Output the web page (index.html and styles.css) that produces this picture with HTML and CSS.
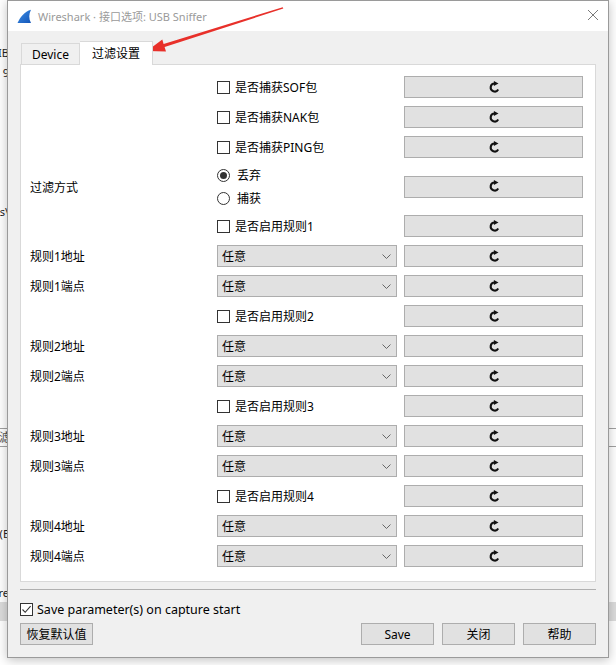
FILE: index.html
```html
<!doctype html>
<html lang="zh-CN">
  <head>
    <meta charset="UTF-8" />
    <title>Wireshark · 接口选项: USB Sniffer</title>
    <link rel="stylesheet" href="styles.css">
  </head>
  <body>
    <!-- 背景中的主窗口残影 -->
    <div class="backdrop">
      <span class="bg-text" style="top:45px">IB</span>
      <span class="bg-text" style="top:65px">9</span>
      <span class="bg-text" style="top:204px">s\</span>
      <div class="bg-field">滤</div>
      <span class="bg-text" style="top:526px">(E</span>
      <span class="bg-text" style="top:585px">re</span>
      <div class="bg-strip"></div>
    </div>

    <div class="window">
      <!-- 标题栏 -->
      <div class="titlebar">
        <svg class="app-icon" width="15" height="15" viewBox="0 0 15 15">
          <defs>
            <linearGradient id="fin" x1="0" y1="0" x2="1" y2="1">
              <stop offset="0" stop-color="#3d8fe6" />
              <stop offset="1" stop-color="#1456b8" />
            </linearGradient>
          </defs>
          <path d="M0.5 14 C3 8.5 7.5 2.5 14 0.8 C11.8 5 11.6 9.8 14 14 Z" fill="url(#fin)" />
        </svg>
        <div class="title-text">Wireshark · 接口选项: USB Sniffer</div>
        <svg class="close-icon" width="12" height="12" viewBox="0 0 12 12">
          <path d="M1 1 L11 11 M11 1 L1 11" stroke="#7a7a7a" stroke-width="1" />
        </svg>
      </div>

      <div class="dialog-body">
        <!-- 标签页 -->
        <div class="tabs">
          <div class="tab">Device</div>
          <div class="tab active">过滤设置</div>
        </div>

        <div class="pane">
          <div class="form-grid">
            <div class="label"></div>
            <label class="check"><span class="box"></span>是否捕获SOF包</label>
            <button class="reset"><svg width="13" height="13" viewBox="0 0 12 12"><path d="M6.2 2.3 A3.7 3.7 0 1 0 9.4 7.8" fill="none" stroke="#111" stroke-width="1.9" /><path d="M5.4 0 L9.7 2.3 L5.4 4.6 Z" fill="#111" /></svg></button>

            <div class="label"></div>
            <label class="check"><span class="box"></span>是否捕获NAK包</label>
            <button class="reset"><svg width="13" height="13" viewBox="0 0 12 12"><path d="M6.2 2.3 A3.7 3.7 0 1 0 9.4 7.8" fill="none" stroke="#111" stroke-width="1.9" /><path d="M5.4 0 L9.7 2.3 L5.4 4.6 Z" fill="#111" /></svg></button>

            <div class="label"></div>
            <label class="check"><span class="box"></span>是否捕获PING包</label>
            <button class="reset"><svg width="13" height="13" viewBox="0 0 12 12"><path d="M6.2 2.3 A3.7 3.7 0 1 0 9.4 7.8" fill="none" stroke="#111" stroke-width="1.9" /><path d="M5.4 0 L9.7 2.3 L5.4 4.6 Z" fill="#111" /></svg></button>

            <div class="label">过滤方式</div>
            <div class="radio-group">
              <label class="radio"><span class="dot checked"></span>丢弃</label>
              <label class="radio"><span class="dot"></span>捕获</label>
            </div>
            <div class="reset-cell">
              <button class="reset"><svg width="13" height="13" viewBox="0 0 12 12"><path d="M6.2 2.3 A3.7 3.7 0 1 0 9.4 7.8" fill="none" stroke="#111" stroke-width="1.9" /><path d="M5.4 0 L9.7 2.3 L5.4 4.6 Z" fill="#111" /></svg></button>
            </div>

            <div class="label"></div>
            <label class="check"><span class="box"></span>是否启用规则1</label>
            <button class="reset"><svg width="13" height="13" viewBox="0 0 12 12"><path d="M6.2 2.3 A3.7 3.7 0 1 0 9.4 7.8" fill="none" stroke="#111" stroke-width="1.9" /><path d="M5.4 0 L9.7 2.3 L5.4 4.6 Z" fill="#111" /></svg></button>

            <div class="label">规则1地址</div>
            <div class="combo">任意<svg width="9" height="5" viewBox="0 0 9 5"><path d="M0.5 0.5 L4.5 4.5 L8.5 0.5" fill="none" stroke="#666" /></svg></div>
            <button class="reset"><svg width="13" height="13" viewBox="0 0 12 12"><path d="M6.2 2.3 A3.7 3.7 0 1 0 9.4 7.8" fill="none" stroke="#111" stroke-width="1.9" /><path d="M5.4 0 L9.7 2.3 L5.4 4.6 Z" fill="#111" /></svg></button>

            <div class="label">规则1端点</div>
            <div class="combo">任意<svg width="9" height="5" viewBox="0 0 9 5"><path d="M0.5 0.5 L4.5 4.5 L8.5 0.5" fill="none" stroke="#666" /></svg></div>
            <button class="reset"><svg width="13" height="13" viewBox="0 0 12 12"><path d="M6.2 2.3 A3.7 3.7 0 1 0 9.4 7.8" fill="none" stroke="#111" stroke-width="1.9" /><path d="M5.4 0 L9.7 2.3 L5.4 4.6 Z" fill="#111" /></svg></button>

            <div class="label"></div>
            <label class="check"><span class="box"></span>是否启用规则2</label>
            <button class="reset"><svg width="13" height="13" viewBox="0 0 12 12"><path d="M6.2 2.3 A3.7 3.7 0 1 0 9.4 7.8" fill="none" stroke="#111" stroke-width="1.9" /><path d="M5.4 0 L9.7 2.3 L5.4 4.6 Z" fill="#111" /></svg></button>

            <div class="label">规则2地址</div>
            <div class="combo">任意<svg width="9" height="5" viewBox="0 0 9 5"><path d="M0.5 0.5 L4.5 4.5 L8.5 0.5" fill="none" stroke="#666" /></svg></div>
            <button class="reset"><svg width="13" height="13" viewBox="0 0 12 12"><path d="M6.2 2.3 A3.7 3.7 0 1 0 9.4 7.8" fill="none" stroke="#111" stroke-width="1.9" /><path d="M5.4 0 L9.7 2.3 L5.4 4.6 Z" fill="#111" /></svg></button>

            <div class="label">规则2端点</div>
            <div class="combo">任意<svg width="9" height="5" viewBox="0 0 9 5"><path d="M0.5 0.5 L4.5 4.5 L8.5 0.5" fill="none" stroke="#666" /></svg></div>
            <button class="reset"><svg width="13" height="13" viewBox="0 0 12 12"><path d="M6.2 2.3 A3.7 3.7 0 1 0 9.4 7.8" fill="none" stroke="#111" stroke-width="1.9" /><path d="M5.4 0 L9.7 2.3 L5.4 4.6 Z" fill="#111" /></svg></button>

            <div class="label"></div>
            <label class="check"><span class="box"></span>是否启用规则3</label>
            <button class="reset"><svg width="13" height="13" viewBox="0 0 12 12"><path d="M6.2 2.3 A3.7 3.7 0 1 0 9.4 7.8" fill="none" stroke="#111" stroke-width="1.9" /><path d="M5.4 0 L9.7 2.3 L5.4 4.6 Z" fill="#111" /></svg></button>

            <div class="label">规则3地址</div>
            <div class="combo">任意<svg width="9" height="5" viewBox="0 0 9 5"><path d="M0.5 0.5 L4.5 4.5 L8.5 0.5" fill="none" stroke="#666" /></svg></div>
            <button class="reset"><svg width="13" height="13" viewBox="0 0 12 12"><path d="M6.2 2.3 A3.7 3.7 0 1 0 9.4 7.8" fill="none" stroke="#111" stroke-width="1.9" /><path d="M5.4 0 L9.7 2.3 L5.4 4.6 Z" fill="#111" /></svg></button>

            <div class="label">规则3端点</div>
            <div class="combo">任意<svg width="9" height="5" viewBox="0 0 9 5"><path d="M0.5 0.5 L4.5 4.5 L8.5 0.5" fill="none" stroke="#666" /></svg></div>
            <button class="reset"><svg width="13" height="13" viewBox="0 0 12 12"><path d="M6.2 2.3 A3.7 3.7 0 1 0 9.4 7.8" fill="none" stroke="#111" stroke-width="1.9" /><path d="M5.4 0 L9.7 2.3 L5.4 4.6 Z" fill="#111" /></svg></button>

            <div class="label"></div>
            <label class="check"><span class="box"></span>是否启用规则4</label>
            <button class="reset"><svg width="13" height="13" viewBox="0 0 12 12"><path d="M6.2 2.3 A3.7 3.7 0 1 0 9.4 7.8" fill="none" stroke="#111" stroke-width="1.9" /><path d="M5.4 0 L9.7 2.3 L5.4 4.6 Z" fill="#111" /></svg></button>

            <div class="label">规则4地址</div>
            <div class="combo">任意<svg width="9" height="5" viewBox="0 0 9 5"><path d="M0.5 0.5 L4.5 4.5 L8.5 0.5" fill="none" stroke="#666" /></svg></div>
            <button class="reset"><svg width="13" height="13" viewBox="0 0 12 12"><path d="M6.2 2.3 A3.7 3.7 0 1 0 9.4 7.8" fill="none" stroke="#111" stroke-width="1.9" /><path d="M5.4 0 L9.7 2.3 L5.4 4.6 Z" fill="#111" /></svg></button>

            <div class="label">规则4端点</div>
            <div class="combo">任意<svg width="9" height="5" viewBox="0 0 9 5"><path d="M0.5 0.5 L4.5 4.5 L8.5 0.5" fill="none" stroke="#666" /></svg></div>
            <button class="reset"><svg width="13" height="13" viewBox="0 0 12 12"><path d="M6.2 2.3 A3.7 3.7 0 1 0 9.4 7.8" fill="none" stroke="#111" stroke-width="1.9" /><path d="M5.4 0 L9.7 2.3 L5.4 4.6 Z" fill="#111" /></svg></button>
          </div>
        </div>

        <div class="separator"></div>

        <label class="check save-check">
          <span class="box checked"><svg width="11" height="11" viewBox="0 0 11 11"><path d="M1.5 5.5 L4.2 8.3 L9.6 2.2" fill="none" stroke="#333" stroke-width="1.1" /></svg></span>Save parameter(s) on capture start
        </label>

        <div class="button-row">
          <button class="btn">恢复默认值</button>
          <div class="spacer"></div>
          <button class="btn">Save</button>
          <button class="btn">关闭</button>
          <button class="btn">帮助</button>
        </div>
      </div>
    </div>

    <!-- 标注用的红色箭头 -->
    <svg class="annotation" width="616" height="80" viewBox="0 0 616 80">
      <polygon points="147,51 166,51.4 164.6,47 283.3,8.6 282.7,7.2 163.6,43.9 162.3,39.6" fill="#e8302a" />
    </svg>
  </body>
</html>
```

FILE: styles.css
```css
* {
  margin: 0;
  padding: 0;
  box-sizing: border-box;
}

body {
  width: 616px;
  height: 665px;
  overflow: hidden;
  position: relative;
  background: #fff;
  font-family: 'Noto Sans', 'Noto Sans CJK SC', sans-serif;
  font-size: 12px;
  color: #000;
}

/* 背景窗口 */
.backdrop {
  position: absolute;
  inset: 0;
}

.bg-text {
  position: absolute;
  left: -5px;
  width: 14px;
  text-align: right;
  font-size: 11px;
  color: #222;
}

.bg-field {
  position: absolute;
  top: 428px;
  left: -14px;
  right: -2px;
  height: 19px;
  border: 1px solid #a0a0a0;
  padding-left: 12px;
  font-size: 12px;
  line-height: 17px;
  color: #555;
}

.bg-strip {
  position: absolute;
  top: 602px;
  left: 0;
  right: 0;
  height: 19px;
  background: #dcdcdc;
}

/* 对话框 */
.window {
  position: absolute;
  left: 7px;
  top: 0;
  width: 602px;
  height: 658px;
  background: #f0f0f0;
  border: 1px solid #9a9a9a;
  box-shadow: 0 2px 10px rgba(0, 0, 0, 0.25);
  display: flex;
  flex-direction: column;
}

.titlebar {
  height: 30px;
  background: #fff;
  display: flex;
  align-items: center;
  padding: 0 9px 0 9px;
}

.app-icon {
  margin-right: 6px;
}

.title-text {
  flex: 1;
  font-size: 11px;
  color: #9a9a9a;
  margin-top: -1px;
}

.close-icon {
  margin-top: -2px;
}

.dialog-body {
  flex: 1;
  padding: 10px 12px 0 12px;
  display: flex;
  flex-direction: column;
}

/* 标签页 */
.tabs {
  display: flex;
  align-items: flex-end;
  height: 23px;
  padding-left: 1px;
}

.tab {
  height: 21px;
  width: 59px;
  border: 1px solid #d9d9d9;
  border-bottom: none;
  background: #f0f0f0;
  display: flex;
  align-items: center;
  justify-content: center;
  font-size: 12px;
}

.tab.active {
  position: relative;
  z-index: 1;
  width: 73px;
  height: 24px;
  margin-bottom: -1px;
  border-left: none;
  background: #fff;
  padding-bottom: 2px;
}

.pane {
  height: 518px;
  background: #fff;
  border: 1px solid #d9d9d9;
  padding: 11px 12px 0 9px;
}

.form-grid {
  display: grid;
  grid-template-columns: 187px 180px 186px;
  grid-template-rows: repeat(3, 22px) 41px repeat(12, 22px);
  row-gap: 8px;
}

.form-grid .reset {
  margin-left: 7px;
}

.reset-cell {
  display: flex;
  align-items: center;
}

.reset-cell .reset {
  flex: 1;
}

.label {
  display: flex;
  align-items: center;
  white-space: nowrap;
}

/* 复选框 / 单选框 */
.check {
  display: flex;
  align-items: center;
  white-space: nowrap;
}

.box {
  width: 13px;
  height: 13px;
  border: 1px solid #333;
  background: #fff;
  margin-right: 5px;
  display: flex;
  align-items: center;
  justify-content: center;
  flex-shrink: 0;
}

.radio-group {
  display: flex;
  flex-direction: column;
  justify-content: space-between;
}

.radio {
  display: flex;
  align-items: center;
  height: 18px;
}

.dot {
  width: 13px;
  height: 13px;
  border: 1px solid #333;
  border-radius: 50%;
  margin-right: 7px;
  display: flex;
  align-items: center;
  justify-content: center;
}

.dot.checked::after {
  content: '';
  width: 7px;
  height: 7px;
  border-radius: 50%;
  background: #333;
}

/* 下拉框 */
.combo {
  height: 22px;
  background: #e1e1e1;
  border: 1px solid #adadad;
  display: flex;
  align-items: center;
  justify-content: space-between;
  padding: 0 5px 0 4px;
}

.reset {
  height: 22px;
  background: #e1e1e1;
  border: 1px solid #adadad;
  display: flex;
  align-items: center;
  justify-content: center;
  padding-left: 2px;
}

.separator {
  height: 1px;
  background: #b0b0b0;
  margin-top: 7px;
}

.save-check {
  margin-top: 13px;
  height: 13px;
  font-size: 12.5px;
}

.save-check .box {
  margin-right: 4px;
}

.button-row {
  display: flex;
  gap: 8px;
  margin-top: 7px;
}

.spacer {
  flex: 1;
}

.btn {
  width: 73px;
  height: 22px;
  background: #e1e1e1;
  border: 1px solid #adadad;
  font-family: 'Noto Sans', 'Noto Sans CJK SC', sans-serif;
  font-size: 12px;
  color: #000;
}

/* 红色箭头 */
.annotation {
  position: absolute;
  left: 0;
  top: 0;
  pointer-events: none;
}
```
